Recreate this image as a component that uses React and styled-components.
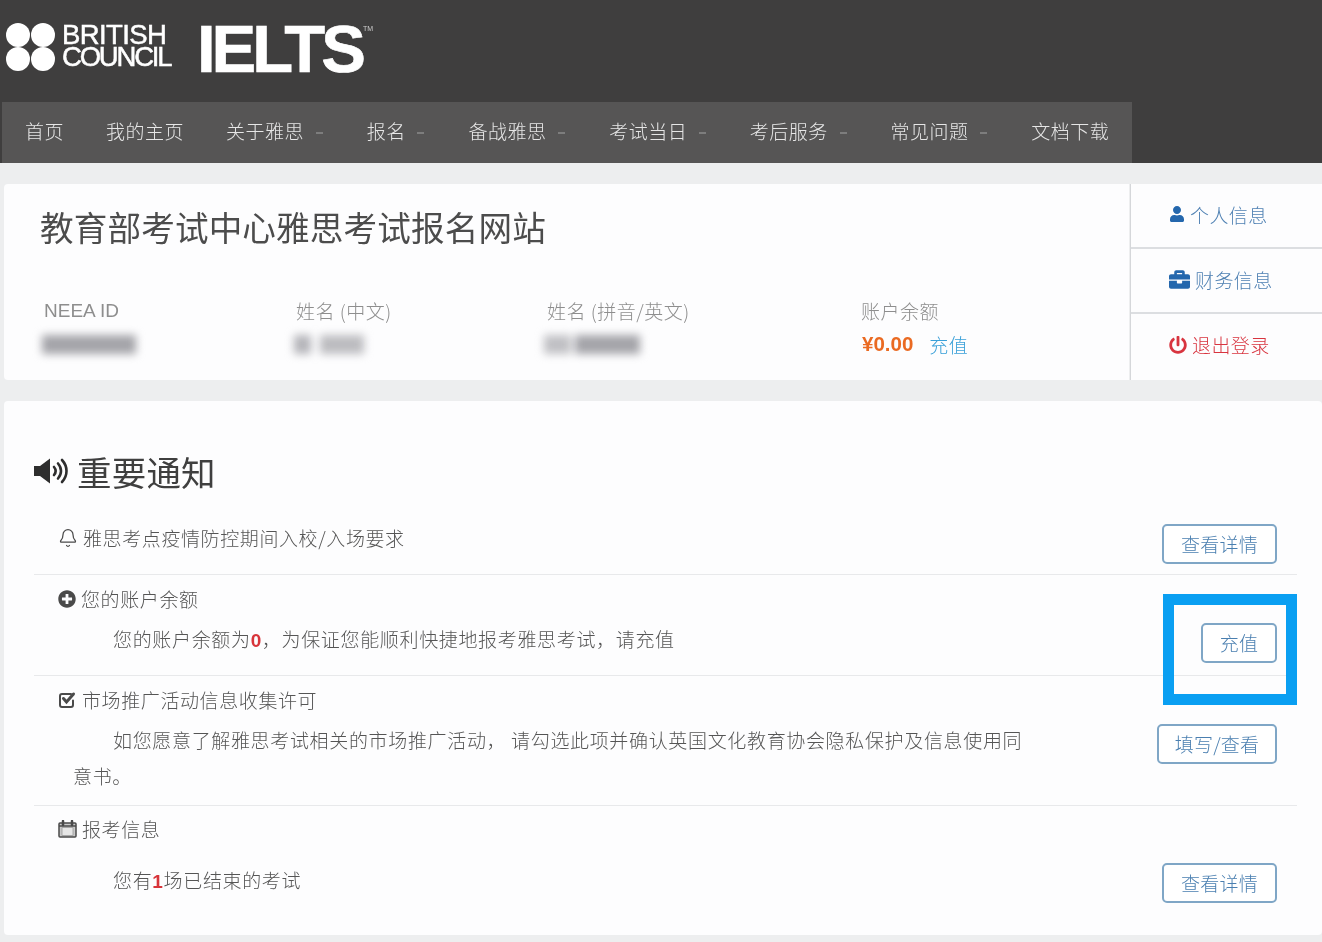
import React from "react";
import styled, { createGlobalStyle } from "styled-components";
import { FaUser, FaBriefcase, FaPowerOff, FaPlusCircle } from "react-icons/fa";
import { Bell } from "lucide-react";

const Global = createGlobalStyle`
  html, body { margin: 0; padding: 0; background: #edeeef; }
  body { font-family: "Noto Sans CJK SC", "Liberation Sans", sans-serif; overflow: hidden; }
  * { box-sizing: border-box; }
`;

const Page = styled.div`
  position: relative;
  width: 1322px;
  height: 942px;
  overflow: hidden;
  background: #edeeef;
  filter: blur(0.35px);
`;

const Header = styled.header`
  height: 163px;
  background: #3f3e3e;
  display: flex;
  flex-direction: column;
`;
const LogoBar = styled.div`
  height: 102px;
  display: flex;
  align-items: flex-start;
  padding: 23px 0 0 6px;
`;
const Council = styled.div`
  display: flex;
  flex-direction: column;
  margin: 1px 0 0 7px;
  width: 135px;
`;
const CouncilWord = styled.span`
  font-family: "Liberation Sans", sans-serif;
  font-size: 27.5px;
  line-height: 22px;
  height: 22px;
  color: #fff;
  -webkit-text-stroke: 0.5px #fff;
  letter-spacing: ${(p) => p.$ls}px;
`;
const Ielts = styled.div`
  font-family: "Liberation Sans", sans-serif;
  font-weight: 700;
  font-size: 67px;
  line-height: 52px;
  color: #fff;
  letter-spacing: -4px;
  -webkit-text-stroke: 0.6px #fff;
`;
const Tm = styled.sup`
  font-family: "Liberation Sans", sans-serif;
  font-size: 7px;
  line-height: 8px;
  color: #ccc;
  margin: 2px 0 0 1px;
`;
const Nav = styled.nav`
  height: 61px;
  width: 1130px;
  margin-left: 2px;
  padding: 0 0 4px 2px;
  background: #565555;
  display: flex;
  align-items: center;
`;
const NavItem = styled.a`
  display: flex;
  align-items: center;
  padding: 0 21px;
  font-size: 19px;
  letter-spacing: 0.5px;
  color: #e6e6e6;
  font-weight: 300;
  white-space: nowrap;
`;
const Caret = styled.i`
  width: 7px;
  height: 2px;
  margin: 5px 0 0 13.7px;
  background: #7d7d7d;
  transform: translateX(-2px);
`;
const Profile = styled.section`
  display: flex;
  height: 196px;
  margin: 21px 0 0 4px;
`;
const ProfileMain = styled.div`
  width: 1125px;
  background: #fdfdfe;
  border-radius: 4px 0 0 4px;
  padding: 17px 0 0 36px;
`;
const SiteTitle = styled.h1`
  margin: 0;
  font-size: 33.6px;
  line-height: 52px;
  letter-spacing: 0.15px;
  font-weight: 400;
  color: #4c4c4c;
`;
const Fields = styled.div`
  display: grid;
  grid-template-columns: 252px 251px 314px 200px;
  margin: 47px 0 0 4px;
`;
const Field = styled.div`
  display: flex;
  flex-direction: column;
  gap: 11px;
`;
const FieldLabel = styled.span`
  font-size: 19px;
  line-height: 22px;
  letter-spacing: 0.5px;
  color: #8e8e8e;
  font-weight: 300;
  white-space: nowrap;
`;
const NeeaLabel = styled(FieldLabel)`
  font-family: "Liberation Sans", sans-serif;
  font-size: 19px;
  letter-spacing: 0;
`;
const Blurred = styled.div`
  display: flex;
  gap: ${(p) => p.$gap || 0}px;
  height: 22px;
  margin-left: ${(p) => p.$ml}px;
  align-items: center;
  filter: blur(4px);
`;
const Smear = styled.i`
  display: block;
  width: ${(p) => p.$w}px;
  height: 19px;
  background: ${(p) => p.$c || "#a4a4a9"};
`;
const BalanceRow = styled.div`
  display: flex;
  align-items: center;
  gap: 16px;
  height: 22px;
  padding-left: 1px;
`;
const Balance = styled.b`
  font-family: "Liberation Sans", sans-serif;
  font-size: 20.5px;
  font-weight: 700;
  color: #ea6a22;
`;
const TopUp = styled.a`
  font-size: 19px;
  letter-spacing: 0.5px;
  color: #3aa0d8;
  font-weight: 300;
`;
const SideLinks = styled.aside`
  flex: 1;
  margin-left: 2px;
  display: flex;
  flex-direction: column;
  box-shadow: -1px 0 0 #d5d7da;
`;
const SideLink = styled.a`
  flex: ${(p) => (p.$last ? "1" : "none")};
  height: ${(p) => (p.$last ? "auto" : "65px")};
  background: #fdfdfe;
  display: flex;
  align-items: center;
  gap: 5px;
  padding: 0 0 ${(p) => (p.$last ? 5 : 3)}px 38px;
  font-size: 19px;
  color: ${(p) => p.$c};
  font-weight: 300;
  border-bottom: ${(p) => (p.$last ? "0" : "2px solid #dcdee1")};
  letter-spacing: 0.4px;
  svg { flex: none; color: ${(p) => p.$ic || p.$c}; }
`;
const Board = styled.section`
  margin: 21px 0 0 4px;
  height: 534px;
  background: #fdfdfe;
  border-radius: 4px;
  padding: 41px 25px 0 30px;
`;
const BoardTitle = styled.h2`
  margin: 0 0 10px;
  height: 58px;
  display: flex;
  align-items: center;
  gap: 9px;
  font-size: 34.5px;
  letter-spacing: 0.2px;
  font-weight: 400;
  color: #3f3f3f;
  svg { flex: none; }
`;
const Notice = styled.article`
  display: flex;
  justify-content: space-between;
  align-items: flex-start;
  height: ${(p) => p.$h}px;
  padding: ${(p) => p.$pt}px 20px 0 24px;
  border-bottom: ${(p) => (p.$last ? "0" : "1px solid #e8e9eb")};
`;
const NoticeText = styled.div`
  width: 968px;
  margin: ${(p) => p.$mt || 0}px auto 0 0;
`;
const NoticeTitle = styled.h3`
  margin: 0;
  display: flex;
  align-items: center;
  gap: 5px;
  font-size: 19px;
  line-height: 26px;
  font-weight: 300;
  color: #555;
  letter-spacing: 0.6px;
  white-space: nowrap;
  svg { flex: none; color: #4a4a4a; }
`;
const NoticeBody = styled.p`
  margin: ${(p) => p.$mt}px 0 0 15px;
  text-indent: 40px;
  font-size: 19px;
  line-height: 36px;
  font-weight: 300;
  letter-spacing: 0.66px;
  color: #555;
`;
const Count = styled.b`
  font-family: "Liberation Sans", sans-serif;
  font-weight: 700;
  color: #d8343a;
`;
const ActionButton = styled.a`
  flex: none;
  height: 40px;
  width: ${(p) => p.$w}px;
  margin-top: ${(p) => p.$mt}px;
  padding-bottom: 2px;
  display: flex;
  align-items: center;
  justify-content: center;
  border: 2px solid #7fa6c6;
  border-radius: 5px;
  background: #fff;
  font-size: 19px;
  font-weight: 300;
  letter-spacing: 0.2px;
  color: #4a7fb0;
`;
const Highlight = styled.div`
  position: absolute;
  left: 1163px;
  top: 594px;
  width: 134px;
  height: 111px;
  border: 11px solid #0a9ff2;
  pointer-events: none;
`;

const Circles = () => (
  <svg width="49" height="48" viewBox="0 0 49 48" fill="#fff">
    <circle cx="12" cy="12" r="12" />
    <circle cx="37" cy="12" r="12" />
    <circle cx="12" cy="36" r="12" />
    <circle cx="37" cy="36" r="12" />
  </svg>
);

const Speaker = () => (
  <svg width="34" height="28" viewBox="0 0 34 28" fill="none" stroke="#2e2e2e" strokeWidth="2.6" strokeLinecap="round">
    <path d="M0 9h6L16 1.500v25L6 19H0z" fill="#2e2e2e" stroke="none" />
    <path d="M20 10c2 2.400 2 5.600 0 8" />
    <path d="M24 6.500c4 4.500 4 10.500 0 15" />
    <path d="M28 3c6 6.500 6 15.500 0 22" />
  </svg>
);

const CheckBox = () => (
  <svg width="19" height="18" viewBox="0 0 19 18" fill="none" stroke="#4a4a4a">
    <path d="M15 9.500V14a2 2 0 0 1-2 2H4a2 2 0 0 1-2-2V5a2 2 0 0 1 2-2h9" strokeWidth="2" strokeLinecap="round" />
    <path d="M5.500 7.500l3 3.500 7-8" strokeWidth="3" strokeLinecap="round" />
  </svg>
);

const CalendarIcon = () => (
  <svg width="19" height="18" viewBox="0 0 19 18" fill="none" stroke="#4a4a4a">
    <rect x="1" y="3" width="17" height="14" rx="1" fill="#c9c9c9" strokeWidth="1.500" />
    <path d="M1 6h17" strokeWidth="1.500" />
    <path d="M4 7.500h11v8H4z" fill="#e6e6e6" stroke="#9a9a9a" strokeWidth="0.800" />
    <path d="M5 1v4M14 1v4" strokeWidth="2.500" strokeLinecap="round" />
  </svg>
);

const navItems = [
  ["首页"], ["我的主页"], ["关于雅思", 1], ["报名", 1], ["备战雅思", 1],
  ["考试当日", 1], ["考后服务", 1], ["常见问题", 1], ["文档下载"],
];

export default function App() {
  return (
    <Page>
      <Global />
      <Header>
        <LogoBar>
          <Circles />
          <Council>
            <CouncilWord $ls={-0.6}>BRITISH</CouncilWord>
            <CouncilWord $ls={-2.2}>COUNCIL</CouncilWord>
          </Council>
          <Ielts>IELTS</Ielts>
          <Tm>TM</Tm>
        </LogoBar>
        <Nav>
          {navItems.map(([t, c]) => (
            <NavItem key={t}>{t}{c ? <Caret /> : null}</NavItem>
          ))}
        </Nav>
      </Header>

      <Profile>
        <ProfileMain>
          <SiteTitle>教育部考试中心雅思考试报名网站</SiteTitle>
          <Fields>
            <Field>
              <NeeaLabel>NEEA ID</NeeaLabel>
              <Blurred $ml={-2}><Smear $w={94} /></Blurred>
            </Field>
            <Field>
              <FieldLabel>姓名 (中文)</FieldLabel>
              <Blurred $ml={-2} $gap={9}><Smear $w={17} $c="#b4b4b9" /><Smear $w={44} $c="#bcbcc0" /></Blurred>
            </Field>
            <Field>
              <FieldLabel>姓名 (拼音/英文)</FieldLabel>
              <Blurred $ml={-3} $gap={4}><Smear $w={27} $c="#c0c0c4" /><Smear $w={65} /></Blurred>
            </Field>
            <Field>
              <FieldLabel>账户余额</FieldLabel>
              <BalanceRow><Balance>¥0.00</Balance><TopUp>充值</TopUp></BalanceRow>
            </Field>
          </Fields>
        </ProfileMain>
        <SideLinks>
          <SideLink $c="#4f81b3" $ic="#2467ad"><FaUser size={16} />个人信息</SideLink>
          <SideLink $c="#4f81b3" $ic="#2467ad"><FaBriefcase size={21} />财务信息</SideLink>
          <SideLink $c="#d8343f" $last><FaPowerOff size={18} />退出登录</SideLink>
        </SideLinks>
      </Profile>

      <Board>
        <BoardTitle><Speaker />重要通知</BoardTitle>
        <Notice $h={65} $pt={14}>
          <NoticeText $mt={1}>
            <NoticeTitle><Bell size={20} strokeWidth={1.5} />雅思考点疫情防控期间入校/入场要求</NoticeTitle>
          </NoticeText>
          <ActionButton $w={115} $mt={0}>查看详情</ActionButton>
        </Notice>
        <Notice $h={101} $pt={11}>
          <NoticeText>
            <NoticeTitle><FaPlusCircle size={18} />您的账户余额</NoticeTitle>
            <NoticeBody $mt={9}>您的账户余额为<Count>0</Count>，为保证您能顺利快捷地报考雅思考试，请充值</NoticeBody>
          </NoticeText>
          <ActionButton $w={76} $mt={37}>充值</ActionButton>
        </Notice>
        <Notice $h={130} $pt={11}>
          <NoticeText>
            <NoticeTitle><CheckBox />市场推广活动信息收集许可</NoticeTitle>
            <NoticeBody $mt={9}>如您愿意了解雅思考试相关的市场推广活动， 请勾选此项并确认英国文化教育协会隐私保护及信息使用同意书。</NoticeBody>
          </NoticeText>
          <ActionButton $w={120} $mt={37}>填写/查看</ActionButton>
        </Notice>
        <Notice $h={128} $pt={10} $last>
          <NoticeText>
            <NoticeTitle><CalendarIcon />报考信息</NoticeTitle>
            <NoticeBody $mt={20}>您有<Count>1</Count>场已结束的考试</NoticeBody>
          </NoticeText>
          <ActionButton $w={115} $mt={47}>查看详情</ActionButton>
        </Notice>
      </Board>
      <Highlight />
    </Page>
  );
}
